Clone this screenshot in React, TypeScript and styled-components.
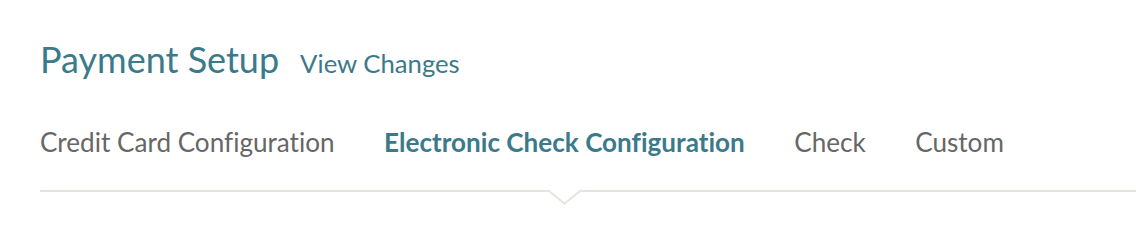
import React from "react";
import styled, { createGlobalStyle } from "styled-components";

const Global = createGlobalStyle`
  html, body { margin: 0; padding: 0; background: #fff; }
  body {
    font-family: Lato, "Open Sans", sans-serif;
    font-variant-ligatures: no-common-ligatures;
    -webkit-font-smoothing: antialiased;
  }
`;

const Page = styled.div`
  padding: 37px 0 38px 40px;
  min-height: 230px;
  box-sizing: border-box;
`;

const Header = styled.div`
  display: flex;
  align-items: baseline;
  gap: 21px;
`;

const Title = styled.h1`
  margin: 0;
  font-size: 36px;
  font-weight: 400;
  color: #3b7a8a;
  line-height: 44px;
`;

const HeaderLink = styled.a`
  font-size: 25.7px;
  color: #3b7a8a;
  text-decoration: none;
`;

const Tabs = styled.nav`
  display: flex;
  align-items: flex-start;
  gap: 49.5px;
  margin-top: 45px;
  padding-bottom: 32px;
  border-bottom: 2px solid #e6e3de;
`;

const Tab = styled.div<{ $active?: boolean }>`
  position: relative;
  font-size: 26.1px;
  line-height: 32px;
  white-space: nowrap;
  color: ${(p) => (p.$active ? "#3b7a8a" : "#666")};
  font-weight: ${(p) => (p.$active ? 700 : 400)};
`;

const Caret = styled.span`
  position: absolute;
  left: 50%;
  top: 52px;
  width: 23px;
  height: 23px;
  margin-left: -12.5px;
  background: #fff;
  border-right: 2px solid #e6e3de;
  border-bottom: 2px solid #e6e3de;
  transform: scaleY(0.8) rotate(45deg);
`;

export default function App() {
  return (
    <>
      <Global />
      <Page>
        <Header>
          <Title>Payment Setup</Title>
          <HeaderLink href="#">View Changes</HeaderLink>
        </Header>
        <Tabs>
          <Tab>Credit Card Configuration</Tab>
          <Tab $active>
            Electronic Check Configuration
            <Caret />
          </Tab>
          <Tab>Check</Tab>
          <Tab>Custom</Tab>
        </Tabs>
      </Page>
    </>
  );
}
